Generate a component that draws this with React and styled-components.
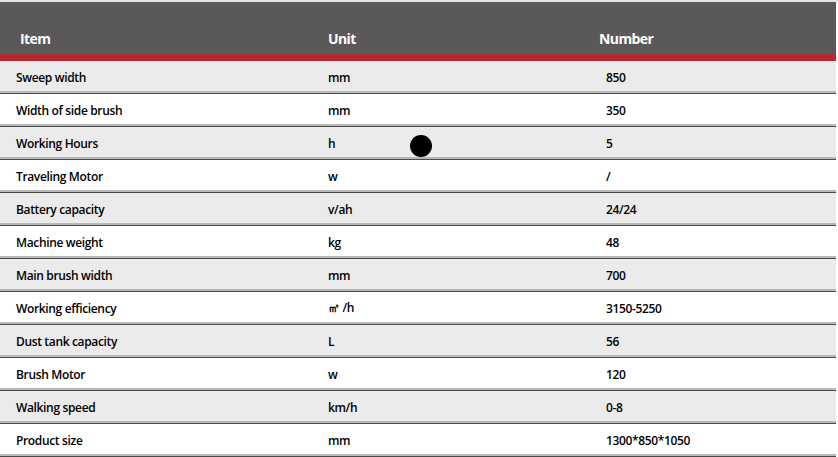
import React from "react";
import styled, { createGlobalStyle } from "styled-components";

const rows = [
  ["Sweep width", "mm", "850"],
  ["Width of side brush", "mm", "350"],
  ["Working Hours", "h", "5"],
  ["Traveling Motor", "w", "/"],
  ["Battery capacity", "v/ah", "24/24"],
  ["Machine weight", "kg", "48"],
  ["Main brush width", "mm", "700"],
  ["Working efficiency", "㎡ /h", "3150-5250"],
  ["Dust tank capacity", "L", "56"],
  ["Brush Motor", "w", "120"],
  ["Walking speed", "km/h", "0-8"],
  ["Product size", "mm", "1300*850*1050"],
];

const App = () => {
  return (
    <>
      <Global />
      <Page>
        <Table>
          <Head>
            <HeadCell $pad={20}>Item</HeadCell>
            <HeadCell $pad={16}>Unit</HeadCell>
            <HeadCell $pad={9}>Number</HeadCell>
          </Head>
          <RedBar />
          {rows.map((r, i) => (
            <Row key={r[0]} $alt={i % 2 === 0}>
              <Cell>{r[0]}</Cell>
              <Cell>{r[1]}</Cell>
              <Cell>{r[2]}</Cell>
            </Row>
          ))}
          <Dot />
        </Table>
      </Page>
    </>
  );
};

const Global = createGlobalStyle`
  *{
    margin: 0;
    padding: 0;
    box-sizing: border-box;
  }
  body{
    background: #fff;
    font-family: "Open Sans", "Noto Sans", sans-serif;
  }
`;

const Page = styled.div`
  width: 838px;
  height: 457px;
  overflow: hidden;
  border-top: 2px solid #e4e4e4;
`;

const Table = styled.div`
  position: relative;
  width: 836px;
`;

const cols = `312px 278px 1fr`;

const Head = styled.div`
  display: grid;
  grid-template-columns: ${cols};
  height: 52px;
  background: #5a5858;
  align-items: end;
  padding-bottom: 6px;
`;

const HeadCell = styled.div`
  padding-left: ${(p) => p.$pad}px;
  color: #fff;
  font-size: 14px;
  font-weight: 700;
  letter-spacing: -0.6px;
`;

const RedBar = styled.div`
  height: 7px;
  background: linear-gradient(#a8343a, #b7262c 40%, #b5272c);
`;

const Row = styled.div`
  display: grid;
  grid-template-columns: ${cols};
  height: 33px;
  align-items: center;
  background: ${(p) => (p.$alt ? "#ebebeb" : "#fff")};
  border-bottom: 1px solid #4a4a4a;
  box-shadow: inset 0 -2px 0 #b8b8b8;
`;

const Cell = styled.div`
  padding-left: 16px;
  color: #000;
  font-size: 12px;
  font-weight: 600;
  letter-spacing: -0.35px;
`;

const Dot = styled.div`
  position: absolute;
  left: 410px;
  top: 133px;
  width: 22px;
  height: 22px;
  border-radius: 50%;
  background: #000;
`;

export default App;
